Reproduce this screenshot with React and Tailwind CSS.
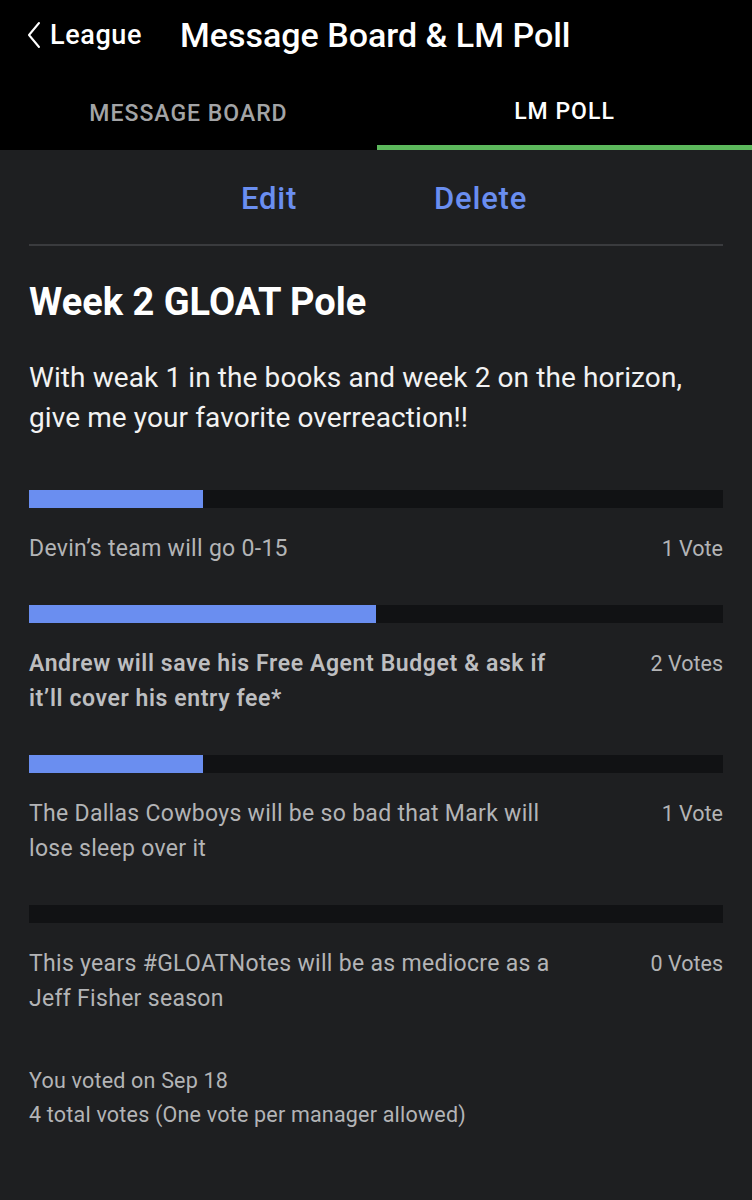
import React from "react";

const options = [
  { lines: ["Devin’s team will go 0-15"], votes: "1 Vote", pct: 25, bold: false },
  { lines: ["Andrew will save his Free Agent Budget & ask if", "it’ll cover his entry fee*"], votes: "2 Votes", pct: 50, bold: true },
  { lines: ["The Dallas Cowboys will be so bad that Mark will", "lose sleep over it"], votes: "1 Vote", pct: 25, bold: false },
  { lines: ["This years #GLOATNotes will be as mediocre as a", "Jeff Fisher season"], votes: "0 Votes", pct: 0, bold: false },
];

export default function App() {
  const font = { fontFamily: "Roboto, 'Liberation Sans', sans-serif" };
  return (
    <div className="w-[752px] min-h-[1200px] bg-[#1e1f21]" style={font}>
      <div className="bg-black h-[150px] flex flex-col">
        <div className="h-[70px] flex items-center">
          <div className="flex items-center pl-[26px] w-[180px]">
            <svg width="16" height="28" viewBox="0 0 16 28" className="mr-[8px]">
              <path d="M13 2 L3 14 L13 26" fill="none" stroke="#ffffff" strokeWidth="2" strokeLinecap="round" strokeLinejoin="round" />
            </svg>
            <span className="text-white text-[27px] font-medium tracking-[0.6px]">League</span>
          </div>
          <span className="text-white text-[34px] font-medium tracking-[0px]">Message Board &amp; LM Poll</span>
        </div>
        <div className="flex flex-1">
          <div className="w-[377px] flex items-center justify-center pt-[9px] text-[23px] font-medium text-[#a3a4a6] tracking-[1px]">
            MESSAGE BOARD
          </div>
          <div className="flex-1 flex flex-col">
            <div className="flex-1 flex items-center justify-center pt-[10px] text-[23px] font-medium text-white tracking-[1px]">
              LM POLL
            </div>
            <div className="h-[5px] bg-[#5cb85c]" />
          </div>
        </div>
      </div>

      <div className="px-[29px]">
        <div className="h-[96px] flex items-center justify-center gap-[137px] pl-[16px] pt-[4px] border-b-2 border-[#3a3b3e]">
          <span className="text-[31px] font-medium text-[#6a8ef0] tracking-[0.8px]">Edit</span>
          <span className="text-[31px] font-medium text-[#6a8ef0] tracking-[0.8px]">Delete</span>
        </div>

        <h1 className="mt-[36px] text-[38px] leading-[40px] font-bold text-white tracking-[0px]">Week 2 GLOAT Pole</h1>
        <p className="mt-[36px] text-[28px] leading-[40px] text-[#f2f2f2] tracking-[0.1px] whitespace-nowrap">
          With weak 1 in the books and week 2 on the horizon,
          <br />
          give me your favorite overreaction!!
        </p>

        <div className="mt-[52px] flex flex-col gap-[39px]">
          {options.map((o, i) => (
            <div key={i}>
              <div className="h-[18px] bg-[#111214]">
                {o.pct > 0 && <div className="h-full bg-[#6a8ef0]" style={{ width: `${o.pct}%` }} />}
              </div>
              <div className="mt-[23px] flex justify-between">
                <div className={`whitespace-nowrap text-[23px] leading-[35px] ${o.bold ? "font-semibold text-[#bdbec0] tracking-[0.6px]" : "text-[#b3b4b6] tracking-[0.3px]"}`}>
                  {o.lines.map((l, j) => (
                    <div key={j}>{l}</div>
                  ))}
                </div>
                <div className="text-[21.5px] leading-[35px] text-[#b3b4b6]">{o.votes}</div>
              </div>
            </div>
          ))}
        </div>

        <div className="mt-[48px] text-[21.5px] leading-[34px] text-[#b3b4b6] tracking-[0.2px]">
          <div>You voted on Sep 18</div>
          <div>4 total votes (One vote per manager allowed)</div>
        </div>
      </div>
    </div>
  );
}
